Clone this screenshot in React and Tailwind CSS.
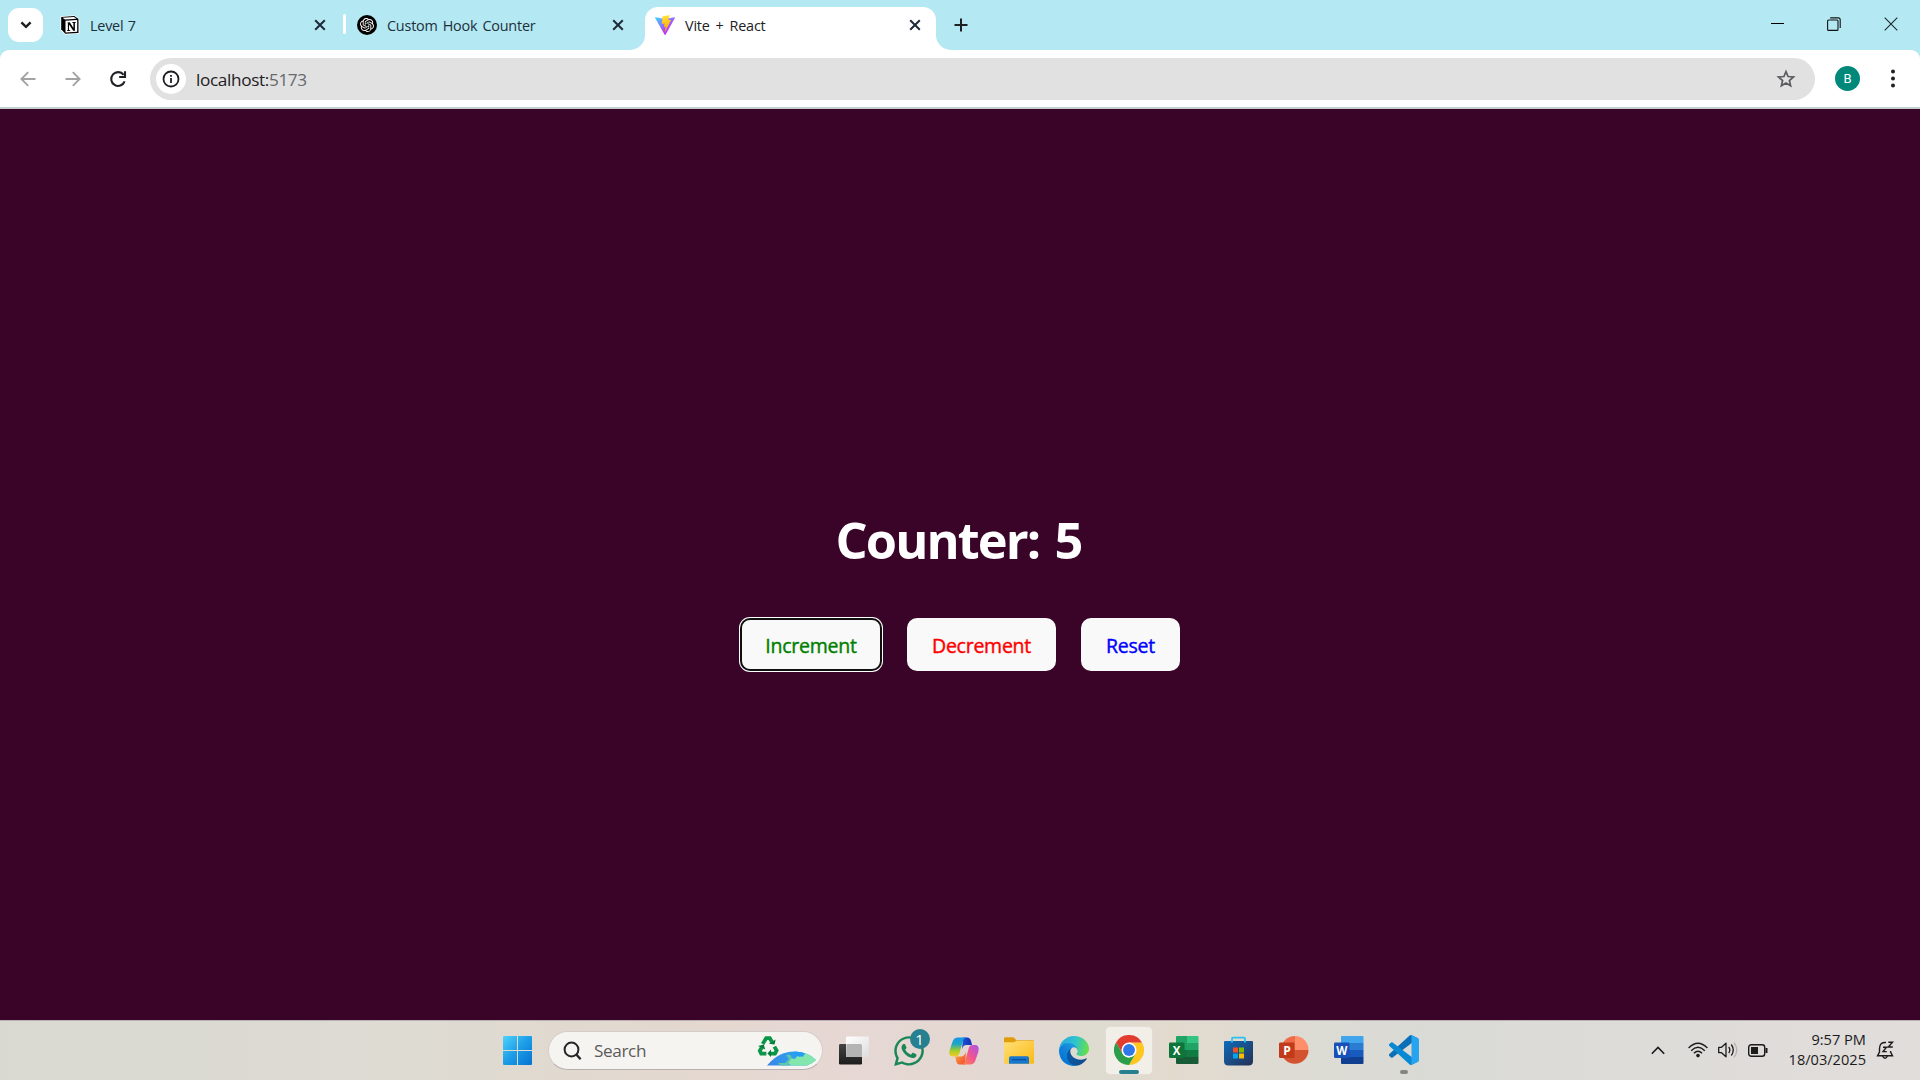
import React from "react";
import { SiOpenai } from "react-icons/si";
import { FaWhatsapp } from "react-icons/fa";

const CloseX = () => (
  <svg width="12" height="12" viewBox="0 0 12 12" fill="none" stroke="#1f2937" strokeWidth="2">
    <path d="M1.2 1.2 10.8 10.8M10.8 1.2 1.2 10.8" />
  </svg>
);

const NotionIcon = () => (
  <svg width="20" height="20" viewBox="0 0 20 20">
    <path d="M1 1.8 14.5 .8 19 4.2V18.2L5 19.3 1 14.6Z" fill="#fff" stroke="#fff" strokeWidth="1" strokeLinejoin="round" />
    <path d="M1.2 2 14.3 1.1 18.5 4.1V18L5.2 18.8 1.2 14.2Z" fill="#000" />
    <path d="M2.6 2.8 14 2 16.4 3.8 5 4.5Z" fill="#fff" />
    <path d="M5.5 5.8 17.2 5V16.8L5.5 17.5Z" fill="#fff" />
    <path d="M7.3 7.5 9.8 7.3 13.4 12.9V8.1L12.4 7.9V7.1L15.9 6.9V7.6L14.9 7.9V15.7L13.4 15.9 9 9.5V14.9L10.2 15.2V15.9L7 16.1V15.4L7.9 15.1V8.5Z" fill="#000" />
  </svg>
);

const ViteIcon = () => (
  <svg width="20" height="20" viewBox="0 0 256 257">
    <defs>
      <linearGradient id="va" x1="-.8%" x2="57.6%" y1="7.6%" y2="78.4%">
        <stop offset="0" stopColor="#41D1FF" />
        <stop offset="1" stopColor="#BD34FE" />
      </linearGradient>
      <linearGradient id="vb" x1="43.4%" x2="50.3%" y1="2.2%" y2="89%">
        <stop offset="0" stopColor="#FFEA83" />
        <stop offset=".08" stopColor="#FFDD35" />
        <stop offset="1" stopColor="#FFA800" />
      </linearGradient>
    </defs>
    <path fill="url(#va)" d="M255.153 37.938 134.897 252.976c-2.483 4.44-8.862 4.466-11.382.048L.875 37.958c-2.746-4.814 1.371-10.646 6.827-9.67l120.385 21.517a6.537 6.537 0 0 0 2.322-.004l117.867-21.483c5.438-.991 9.574 4.796 6.877 9.62Z" />
    <path fill="url(#vb)" d="M185.432.063 96.44 17.501a3.268 3.268 0 0 0-2.634 3.014l-5.474 92.456a3.268 3.268 0 0 0 3.997 3.378l24.777-5.718c2.318-.535 4.413 1.507 3.936 3.838l-7.361 36.047c-.495 2.426 1.782 4.5 4.151 3.78l15.304-4.649c2.372-.72 4.652 1.36 4.15 3.788l-11.698 56.621c-.732 3.542 3.979 5.473 5.943 2.437l1.313-2.028 72.516-144.72c1.215-2.423-.88-5.186-3.54-4.672l-25.505 4.922c-2.396.462-4.435-1.77-3.759-4.114l16.646-57.705c.677-2.35-1.37-4.583-3.769-4.113Z" />
  </svg>
);

function TabStrip() {
  return (
    <div className="flex h-[50px] w-full items-start bg-[#b4e8f3]">
      <div className="ml-2 mt-2 flex h-[34px] w-[35px] shrink-0 items-center justify-center rounded-[11px] bg-white">
        <svg width="12" height="8" viewBox="0 0 12 8" fill="none" stroke="#1f2023" strokeWidth="2.4"><path d="M1.4 1.3 6 5.8 10.6 1.3" /></svg>
      </div>
      <div className="flex h-[50px] w-[300px] shrink-0 items-center pl-[17px]">
        <NotionIcon />
        <span className="ml-[10px] grow whitespace-nowrap pt-[2px] text-[14.4px] leading-5 tracking-[-0.23px] [word-spacing:1px] text-[#20303a]">Level 7</span>
        <span className="mr-[17px]"><CloseX /></span>
      </div>
      <div className="mt-[14px] h-[20px] w-[3px] shrink-0 rounded-full bg-white" />
      <div className="flex h-[50px] w-[299px] shrink-0 items-center pl-[11px]">
        <span className="flex h-5 w-5 items-center justify-center rounded-full bg-black text-[14px] text-white"><SiOpenai /></span>
        <span className="ml-[10px] grow whitespace-nowrap pt-[2px] text-[14.4px] leading-5 tracking-[-0.2px] [word-spacing:1.5px] text-[#20303a]">Custom Hook Counter</span>
        <span className="mr-[21px]"><CloseX /></span>
      </div>
      <div className="relative mt-[7px] flex h-[43px] w-[291px] shrink-0 items-center rounded-t-[13px] bg-white pb-[7px] pl-[10px]">
        <svg className="absolute bottom-0 -left-[15px]" width="15" height="15" viewBox="0 0 15 15"><path d="M15 0V15H0A15 15 0 0 0 15 0Z" fill="#fff" /></svg>
        <svg className="absolute bottom-0 -right-[15px]" width="15" height="15" viewBox="0 0 15 15"><path d="M0 0V15H15A15 15 0 0 1 0 0Z" fill="#fff" /></svg>
        <ViteIcon />
        <span className="ml-[10px] grow whitespace-nowrap pt-[2px] text-[14.4px] leading-5 tracking-[-0.2px] [word-spacing:2.4px] text-[#202124]">Vite + React</span>
        <span className="mr-[15px]"><CloseX /></span>
      </div>
      <div className="flex h-[50px] grow items-center pl-[18px]">
        <svg width="14" height="14" viewBox="0 0 14 14" stroke="#1f2023" strokeWidth="2"><path d="M7 .5V13.5M.5 7H13.5" /></svg>
      </div>
      <div className="flex h-[48px] shrink-0 items-center gap-[43px] pr-[22px]">
        <svg width="13" height="13" viewBox="0 0 13 13" stroke="#000" shapeRendering="crispEdges"><path d="M0 5.5H13" /></svg>
        <svg width="14" height="14" viewBox="0 0 14 14" fill="none" stroke="#111" strokeWidth="1.1"><rect x=".6" y="3" width="10.4" height="10.4" rx="1" /><path d="M3.2 .9H11.2Q13.2 .9 13.2 2.9V11" /></svg>
        <svg width="14" height="14" viewBox="0 0 14 14" stroke="#1b2b30" strokeWidth="1.1"><path d="M.7 .7 13.3 13.3M13.3 .7 .7 13.3" /></svg>
      </div>
    </div>
  );
}

function Toolbar() {
  return (
    <div className="h-[59px] w-full bg-[#b4e8f3]">
      <div className="flex h-[59px] items-start rounded-t-[9px] border-b-2 border-[#c3cfcb] bg-white pt-2">
        <div className="flex h-[42px] w-[150px] shrink-0 items-center pl-5">
          <svg width="16" height="16" viewBox="0 0 16 16" fill="none" stroke="#a3a3a5" strokeWidth="1.9"><path d="M15.5 8H2M8.2 1.2 1.4 8l6.8 6.8" /></svg>
          <svg className="ml-[28.5px]" width="16" height="16" viewBox="0 0 16 16" fill="none" stroke="#a3a3a5" strokeWidth="1.9"><path d="M.5 8H14M7.8 1.2 14.6 8l-6.8 6.8" /></svg>
          <svg className="ml-[28px]" width="18" height="18" viewBox="0 0 18 18" fill="none" stroke="#1f2023" strokeWidth="2.1"><path d="M15.6 11.4A6.9 6.9 0 1 1 14.6 4.8" /><path d="M16 1.2V7H10.2" /></svg>
        </div>
        <div className="flex h-[42px] w-[1665px] shrink-0 items-center rounded-full bg-[#e1e1e1] pl-[6px]">
          <span className="flex h-[30px] w-[30px] items-center justify-center rounded-full bg-white">
            <svg width="18" height="18" viewBox="0 0 18 18" fill="none" stroke="#1f2023" strokeWidth="1.8"><circle cx="9" cy="9" r="7.5" /><path d="M9 8V13M9 5V6.8" /></svg>
          </span>
          <span className="ml-[10px] grow whitespace-nowrap pt-px text-[17.2px] leading-6 tracking-[-0.36px] text-[#1f2023]">localhost:<span className="text-[#66696d]">5173</span></span>
          <svg className="mr-[19px]" width="20" height="20" viewBox="0 0 20 20" fill="none" stroke="#5a5b5e" strokeWidth="1.7"><path d="M10 2.6 12.1 7.5 17.5 8 13.4 11.5 14.6 16.8 10 14 5.4 16.8 6.6 11.5 2.5 8 7.9 7.5Z" /></svg>
        </div>
        <span className="ml-5 mt-2 flex h-[25px] w-[25px] items-center justify-center rounded-full bg-[#00897b] font-['Roboto',sans-serif] text-[13px] text-white">B</span>
        <svg className="ml-[29.5px] mt-[11px]" width="6" height="19" viewBox="0 0 6 19" fill="#1f2023"><circle cx="3" cy="2.5" r="2" /><circle cx="3" cy="9.5" r="2" /><circle cx="3" cy="16.5" r="2" /></svg>
      </div>
    </div>
  );
}

function CounterPage() {
  return (
    <main className="flex h-[911px] w-full flex-col items-center bg-[#390428]">
      <h1 className="mt-[395px] mr-[3px] whitespace-nowrap text-[50.5px] leading-[72px] font-bold tracking-[-1.9px] [word-spacing:4px] text-white">Counter: 5</h1>
      <div className="mt-[42px] flex gap-[25px] text-[19.5px] leading-6 tracking-[-0.25px]">
        <button className="h-[53px] w-[142px] rounded-[10px] bg-[#f9f9f9] pt-[3px] text-[#008000] shadow-[inset_0_0_0_2px_#101010,0_0_0_1px_#fff] [-webkit-text-stroke:0.4px_#008000]">Increment</button>
        <button className="h-[53px] w-[149px] rounded-[10px] bg-[#f9f9f9] pt-[3px] text-[#ff0000] [-webkit-text-stroke:0.4px_#ff0000]">Decrement</button>
        <button className="h-[53px] w-[99px] rounded-[10px] bg-[#f9f9f9] pt-[3px] text-[#0000ff] [-webkit-text-stroke:0.4px_#0000ff]">Reset</button>
      </div>
    </main>
  );
}

const StartIcon = () => (
  <svg width="29" height="29" viewBox="0 0 29 29">
    <defs><linearGradient id="win" x1="0" y1="0" x2="1" y2="1"><stop offset="0" stopColor="#4fd3fb" /><stop offset=".5" stopColor="#1c9ce6" /><stop offset="1" stopColor="#0573d2" /></linearGradient></defs>
    <path fill="url(#win)" d="M1 0H14V14H0V1Q0 0 1 0ZM15 0H28Q29 0 29 1V14H15ZM0 15H14V29H1Q0 29 0 28ZM15 15H29V28Q29 29 28 29H15Z" />
  </svg>
);

const RecycleGlobe = () => (
  <svg width="60" height="32" viewBox="0 0 60 32">
    <defs>
      <linearGradient id="gl" x1="0" y1="0" x2="1" y2="0"><stop offset="0" stopColor="#3a84e4" /><stop offset="1" stopColor="#27b4f6" /></linearGradient>
      <clipPath id="gc"><path d="M10 30.5Q22 16 38 16.5 52 17 59 25 56 28 50 30.5Z" /></clipPath>
    </defs>
    <g fill="none" stroke="#0a9648" strokeWidth="3.8">
      <path d="M5.600 9 9.200 3.200H12.800L15.200 7.200" />
      <path d="M17.400 11.600 19.600 15.600 18 18.600H13" />
      <path d="M9.400 18.600H4.200L2.800 15.800 5 12" />
    </g>
    <path d="M11.800 8.800 17.600 9.600 18.600 4.600ZM14 14.600 10.400 18.600 14 22ZM1 11 6.800 9.400 8.200 14.400Z" fill="#067e3b" />
    <g clipPath="url(#gc)">
      <path d="M8 14H60V32H8Z" fill="url(#gl)" />
      <path d="M34 30.5 30 27 33 23 38 24 41 20 46 22 48 18 60 22V32H34Z" fill="#83e6ac" />
      <path d="M29 20Q36 19 34 24 30 29 33 32L24 31 21 28 28 28 32 24Z" fill="#5fc7a9" />
      <path d="M38 15 44 16 48 19 43 22 37 20Z" fill="#239ef2" />
    </g>
  </svg>
);

const TaskViewIcon = () => (
  <svg width="30" height="30" viewBox="0 0 30 30">
    <defs>
      <linearGradient id="tk" x1="0" y1="0" x2="0" y2="1"><stop stopColor="#444" /><stop offset="1" stopColor="#1c1c1c" /></linearGradient>
      <linearGradient id="tw" x1="0" y1="0" x2="1" y2="1"><stop stopColor="#fff" /><stop offset="1" stopColor="#ddd" /></linearGradient>
    </defs>
    <rect x="0" y="8" width="23" height="20.500" rx="1.200" fill="url(#tk)" />
    <rect x="7" y=".5" width="23" height="20.500" rx="1.200" fill="url(#tw)" />
    <path d="M7.500 8H21.500Q23 8 23 9.500V21H8.500Q7 21 7 20Z" fill="#b4b4b4" />
  </svg>
);

const CopilotIcon = () => (
  <svg width="30" height="28" viewBox="0 0 30 28">
    <defs>
      <linearGradient id="c1" x1="0" y1="0" x2="0" y2="1"><stop stopColor="#1796e8" /><stop offset=".35" stopColor="#1fa6c4" /><stop offset=".7" stopColor="#a8cd26" /><stop offset="1" stopColor="#f2ca22" /></linearGradient>
      <linearGradient id="c2" x1="1" y1="0" x2="0" y2="1"><stop stopColor="#a654ef" /><stop offset=".5" stopColor="#ef5592" /><stop offset="1" stopColor="#ff8a3d" /></linearGradient>
      <linearGradient id="c3" x1="0" y1="0" x2="1" y2="0"><stop stopColor="#1b55d8" /><stop offset="1" stopColor="#1230b4" /></linearGradient>
      <linearGradient id="c4" x1="0" y1="0" x2="1" y2="1"><stop stopColor="#ffae35" /><stop offset="1" stopColor="#ee4636" /></linearGradient>
    </defs>
    <path d="M14 .5H18.500Q21 .5 22 4L23 8H17Q14.500 8 13 12Z" fill="url(#c3)" />
    <path d="M16 27.500H10.500Q8 27.500 7.300 24.500L6.300 19.500H12Q15 19.500 17 15Z" fill="url(#c4)" />
    <path d="M9 .5H17Q14.800 1 13.900 4L10.500 16Q9.600 19.500 6.500 19.500H4Q-.8 19.500 .7 13L3.600 4.500Q5 .5 9 .5Z" fill="url(#c1)" />
    <path d="M21 27.500H13Q15.200 27 16.100 24L19.500 12Q20.400 8 23.500 8H26Q30.800 8 29.300 15L26.400 23.500Q25 27.500 21 27.500Z" fill="url(#c2)" />
  </svg>
);

const FolderIcon = () => (
  <svg width="30" height="27" viewBox="0 0 30 27">
    <defs><linearGradient id="fo" x1="0" y1="0" x2="1" y2="1"><stop stopColor="#ffe07a" /><stop offset="1" stopColor="#fbb912" /></linearGradient></defs>
    <path d="M0 1.500Q0 .3 1.200 .3H9.500L12.500 3.200H28.800Q30 3.200 30 4.400V9H0Z" fill="#e09d0b" />
    <path d="M0 5.200H10L12.500 3.800H30V26Q30 26.800 29 26.800H1Q0 26.800 0 26Z" fill="url(#fo)" />
    <path d="M5 26.800V21Q5 19.200 6.800 19.200H23.200Q25 19.200 25 21V26.800Z" fill="#1577cf" />
    <path d="M8.500 22.700H21.500" stroke="#0d4c93" strokeWidth="1.200" strokeLinecap="round" />
  </svg>
);

const EdgeIcon = () => (
  <svg width="30" height="30" viewBox="0 0 256 256">
    <defs>
      <linearGradient id="e1" x1="63" x2="242" y1="178" y2="178" gradientUnits="userSpaceOnUse"><stop stopColor="#0c59a4" /><stop offset="1" stopColor="#114a8b" /></linearGradient>
      <linearGradient id="e2" x1="157" x2="46" y1="100" y2="221" gradientUnits="userSpaceOnUse"><stop stopColor="#1b9de2" /><stop offset=".5" stopColor="#1383d8" /><stop offset="1" stopColor="#0078d7" /></linearGradient>
      <linearGradient id="e3" x1="10" x2="250" y1="50" y2="110" gradientUnits="userSpaceOnUse"><stop stopColor="#2aa8e0" /><stop offset=".5" stopColor="#2fc3cf" /><stop offset="1" stopColor="#67e046" /></linearGradient>
    </defs>
    <path fill="url(#e1)" d="M231 190.500a93.700 93.700 0 0 1-10.500 4.700 101.900 101.900 0 0 1-35.900 6.500c-47.300 0-88.500-32.500-88.500-74.300a31.500 31.500 0 0 1 16.400-27.300c-42.800 1.800-53.800 46.400-53.800 72.500 0 73.900 68.100 81.400 82.800 81.400 7.900 0 19.800-2.300 27-4.600l1.300-.4a128.300 128.300 0 0 0 66.600-52.800 4 4 0 0 0-5.400-5.700Z" />
    <path fill="url(#e2)" d="M105.700 241.400a79.200 79.200 0 0 1-22.700-21.300 80.700 80.700 0 0 1 29.500-120c3.200-1.500 8.500-4.100 15.600-4a32.400 32.400 0 0 1 25.700 13 31.900 31.900 0 0 1 6.300 18.700c0-.2 24.500-79.600-80-79.600C36.200 48.200 0 90 0 126.400a130.200 130.200 0 0 0 12.100 56 128 128 0 0 0 156.400 67 75.500 75.500 0 0 1-62.800-8Z" />
    <path fill="url(#e3)" d="M152.300 148.900c-.9 1-3.400 2.500-3.400 5.600 0 2.600 1.700 5.200 4.800 7.300 14.300 10 41.400 8.600 41.500 8.600a59.600 59.600 0 0 0 30.300-8.300 61.400 61.400 0 0 0 30.400-52.900c.3-22.400-8-37.300-11.300-43.900C223.500 23.900 177.700 0 128 0A128 128 0 0 0 0 126.200c.5-36.500 36.800-66 80-66 3.500 0 23.500.3 42 10a72.600 72.600 0 0 1 30.900 29.300c6.100 10.600 7.200 24.100 7.200 29.500s-2.700 13.300-7.800 19.900Z" />
  </svg>
);

const ChromeIcon = () => (
  <svg width="30" height="30" viewBox="0 0 48 48">
    <path d="M24 12H44.800A24 24 0 0 1 24 48L34.400 30Z" fill="#fdc71f" />
    <path d="M3.200 12A24 24 0 0 1 44.800 12H24L13.600 30Z" fill="#e33b2e" />
    <path d="M3.200 12 13.600 30Q18 36 24 36L34.400 30 24 48A24 24 0 0 1 3.200 12Z" fill="#2b9e49" />
    <circle cx="24" cy="24" r="12" fill="#fff" />
    <circle cx="24" cy="24" r="9.500" fill="#2f78ea" />
  </svg>
);

const ExcelIcon = () => (
  <svg width="30" height="29" viewBox="0 0 30 29">
    <path d="M8 0H18V9.500H7V1Q7 0 8 0Z" fill="#21a366" />
    <path d="M18 0H28.500Q29.500 0 29.500 1V7H18Z" fill="#33c481" />
    <path d="M7 7H18V14.500H7Z" fill="#1f9e62" /><path d="M18 7H29.500V14.500H18Z" fill="#21a366" />
    <path d="M7 14H18V21H7Z" fill="#157042" /><path d="M18 14H29.500V21H18Z" fill="#107c41" />
    <path d="M7 21H29.500V27Q29.500 28 28.500 28H8Q7 28 7 27Z" fill="#185c37" />
    <rect x="0" y="6.500" width="15.500" height="15.500" rx="1.300" fill="#0f7439" />
    <text x="7.700" y="18.500" textAnchor="middle" fontFamily="Open Sans, sans-serif" fontWeight="700" fontSize="11.500" fill="#fff">X</text>
  </svg>
);

const StoreIcon = () => (
  <svg width="30" height="30" viewBox="0 0 30 30">
    <defs><linearGradient id="st" x1="0" y1="0" x2="1" y2="1"><stop stopColor="#0d6bbb" /><stop offset="1" stopColor="#263054" /></linearGradient></defs>
    <path d="M1 5H28Q29 5 29 6V25Q29 29.500 24.500 29.500H4.500Q0 29.500 0 25V6Q0 5 1 5Z" fill="url(#st)" />
    <path d="M8 6.500V2.700Q8 1.700 9 1.700H20Q21 1.700 21 2.700V6.500" fill="none" stroke="#2cc0f2" strokeWidth="1.800" />
    <path d="M9 11.500H14V16.500H9Z" fill="#f25022" /><path d="M15 11.500H20V16.500H15Z" fill="#7fba00" />
    <path d="M9 17.500H14V22.500H9Z" fill="#00a4ef" /><path d="M15 17.500H20V22.500H15Z" fill="#ffb900" />
  </svg>
);

const PowerPointIcon = () => (
  <svg width="30" height="29" viewBox="0 0 30 29">
    <path d="M16 14V0A14 14 0 0 0 2 14Z" fill="#ed6c47" />
    <path d="M16 0A13.500 14 0 0 1 29.500 14L16 14.500Z" fill="#ff8f6b" />
    <path d="M2 14H29.500A13.700 13.700 0 0 1 2 14Z" fill="#d35230" />
    <rect x="0" y="6.500" width="15.500" height="15.500" rx="1.300" fill="#c13b1b" />
    <text x="7.900" y="18.500" textAnchor="middle" fontFamily="Open Sans, sans-serif" fontWeight="700" fontSize="12" fill="#fff">P</text>
  </svg>
);

const WordIcon = () => (
  <svg width="30" height="29" viewBox="0 0 30 29">
    <path d="M8 0H28.500Q29.500 0 29.500 1V7H7V1Q7 0 8 0Z" fill="#41a5ee" />
    <path d="M7 7H29.500V14H7Z" fill="#2b7cd3" /><path d="M7 14H29.500V21H7Z" fill="#185abd" />
    <path d="M7 21H29.500V27Q29.500 28 28.500 28H8Q7 28 7 27Z" fill="#103f91" />
    <rect x="0" y="6.500" width="15.500" height="15.500" rx="1.300" fill="#1650b8" />
    <text x="7.700" y="18.500" textAnchor="middle" fontFamily="Open Sans, sans-serif" fontWeight="700" fontSize="11.500" fill="#fff">W</text>
  </svg>
);

const VSCodeIcon = () => (
  <svg width="30" height="30" viewBox="0 0 100 100">
    <path fill="#0a6fb8" d="M96.500 10.700 75.900.8a6.200 6.200 0 0 0-7.100 1.200L1.300 63.600a4.200 4.200 0 0 0 0 6.200l5.500 5a4.200 4.200 0 0 0 5.300.2L93.400 13.300c2.700-2.100 6.600-.1 6.600 3.300v-.3c0-2.400-1.400-4.600-3.500-5.600Z" />
    <path fill="#0989d4" d="m96.500 89.300-20.600 9.900a6.200 6.200 0 0 1-7.100-1.200L1.300 36.400a4.200 4.200 0 0 1 0-6.200l5.500-5a4.200 4.200 0 0 1 5.300-.2l81.300 61.700c2.700 2.100 6.600.1 6.600-3.300v.3c0 2.400-1.400 4.600-3.500 5.600Z" />
    <path fill="#27a3ef" d="M75.900 99.100a6.200 6.200 0 0 1-7.100-1.200c2.300 2.300 6.200.7 6.200-2.600V4.700c0-3.300-3.900-4.900-6.200-2.600a6.200 6.200 0 0 1 7.100-1.200l20.600 9.900a6.200 6.200 0 0 1 3.500 5.600v67.200c0 2.400-1.400 4.600-3.500 5.600L75.900 99.100Z" />
  </svg>
);

function AppCell({ children }) {
  return <div className="flex h-[59px] w-[55px] shrink-0 items-center justify-center">{children}</div>;
}

function Taskbar() {
  return (
    <footer className="flex h-[60px] w-full items-start border-t border-[#b9b1b4] bg-[linear-gradient(90deg,#d9d9d2_0%,#dddbd2_20%,#e3d8cf_35%,#e6d7d3_43%,#e4d8d2_52%,#dedbd0_57%,#e3dace_61%,#dcdbd4_68%,#dadad6_76%,#dedcd9_88%,#e1dddb_100%)]">
      <div className="ml-[503px] mt-[15px]"><StartIcon /></div>
      <div className="ml-[16px] mt-[10px] flex h-[39px] w-[275px] shrink-0 items-center rounded-full border border-[#d5cdc9] border-b-[#b8b0ae] bg-[#f6f4f1] pl-[14px]">
        <svg width="19" height="20" viewBox="0 0 19 20" fill="none" stroke="#262626" strokeWidth="2"><circle cx="8.500" cy="8.500" r="6.900" /><path d="M13.300 13.500 17.600 18.300" strokeWidth="2.400" /></svg>
        <span className="ml-[12px] grow whitespace-nowrap text-[17.2px] leading-6 tracking-[-0.4px] text-[#5c5b5a]">Search</span>
        <span className="mr-[5px]"><RecycleGlobe /></span>
      </div>
      <div className="ml-[3px] flex">
        <AppCell><TaskViewIcon /></AppCell>
        <AppCell>
          <span className="relative text-[34px] text-[#1b8755]">
            <FaWhatsapp />
            <span className="absolute -top-[5px] left-[18px] flex h-5 w-5 items-center justify-center rounded-full bg-[#27808f] text-[15px] leading-5 text-white">1</span>
          </span>
        </AppCell>
        <AppCell><CopilotIcon /></AppCell>
        <AppCell><FolderIcon /></AppCell>
        <AppCell><EdgeIcon /></AppCell>
        <AppCell>
          <div className="mt-[-1px] flex h-[49px] w-12 flex-col items-center rounded-[5px] border border-[#e3ddd5] bg-[#f2eee8] pt-2">
            <ChromeIcon />
            <span className="mt-[5px] h-1 w-5 rounded-full bg-[#27808f]" />
          </div>
        </AppCell>
        <AppCell><ExcelIcon /></AppCell>
        <AppCell><StoreIcon /></AppCell>
        <AppCell><PowerPointIcon /></AppCell>
        <AppCell><WordIcon /></AppCell>
        <div className="flex h-[59px] w-[55px] shrink-0 flex-col items-center pt-[14px]">
          <VSCodeIcon />
          <span className="mt-[5px] h-1 w-2 rounded-full bg-[#858583]" />
        </div>
      </div>
      <div className="flex h-[58px] grow items-center justify-end pr-[25px]">
        <svg width="14" height="9" viewBox="0 0 14 9" fill="none" stroke="#1b1b1b" strokeWidth="1.600"><path d="M.8 7.800 7 1.500 13.200 7.800" /></svg>
        <svg className="ml-[23px]" width="20" height="16" viewBox="0 0 20 16" fill="none" stroke="#1b1b1b" strokeWidth="1.400"><path d="M.6 6Q10-3.500 19.400 6M3.200 8.700Q10 2 16.800 8.700M5.900 11.300Q10 7.300 14.100 11.300" /><circle cx="10" cy="13.600" r="1.800" fill="#1b1b1b" stroke="none" /></svg>
        <svg className="ml-[10px]" width="20" height="16" viewBox="0 0 20 16" fill="none" stroke="#1b1b1b" strokeWidth="1.300"><path d="M.7 5.300H3.500L8 1.200V14.800L3.500 10.700H.7Z" strokeLinejoin="round" /><path d="M10.700 5Q13 8 10.700 11M13.300 2.500Q17.200 8 13.300 13.500" /><path d="M16 .6Q21.500 8 16 15.400" stroke="#b4b1af" /></svg>
        <svg className="ml-[10px]" width="20" height="13" viewBox="0 0 20 13" fill="none" stroke="#1b1b1b" strokeWidth="1.400"><rect x=".7" y=".7" width="16" height="11.600" rx="2.500" /><rect x="3" y="3" width="7" height="7" fill="#1b1b1b" stroke="none" /><path d="M18.500 4V9" strokeWidth="2" /></svg>
        <div className="ml-[19px] w-[79px] pb-[2px] text-right text-[14.6px] leading-5 whitespace-nowrap text-[#1b1b1b]">
          <div className="flex justify-end">9:57 PM</div>
          <div className="flex justify-end">18/03/2025</div>
        </div>
        <svg className="ml-[10px]" width="19" height="19" viewBox="0 0 19 19" fill="none" stroke="#1b1b1b" strokeWidth="1.400"><path d="M10 1.500Q3.500 1 3.500 7.500V11L1.500 14.800H16.500L14.600 11V10" /><path d="M6.500 15Q9 19.500 11.500 15" /><path d="M7 6.200H10.500L7 10.600H10.800M12.300 1.200H16.500L12.300 6H16.800" /></svg>
      </div>
    </footer>
  );
}

export default function App() {
  return (
    <div className="flex h-[1080px] w-[1920px] flex-col overflow-hidden font-['Open_Sans','Noto_Sans',sans-serif]">
      <TabStrip />
      <Toolbar />
      <CounterPage />
      <Taskbar />
    </div>
  );
}
